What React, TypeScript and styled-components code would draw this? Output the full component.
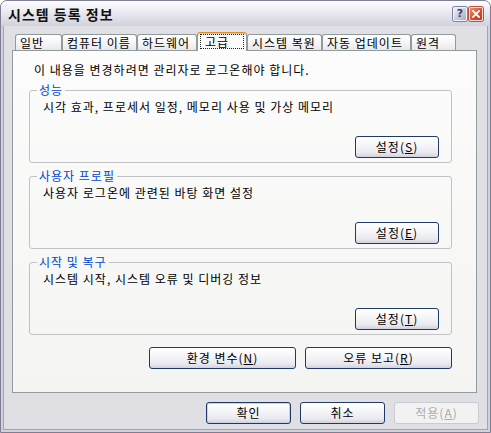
import React from 'react'
import styled, { createGlobalStyle } from 'styled-components'

const GlobalStyle = createGlobalStyle`
  html, body {
    margin: 0;
    padding: 0;
    background: #ffffff;
  }
  body {
    font: 12px 'Noto Sans CJK KR', 'Noto Sans', sans-serif;
    letter-spacing: 1px;
    color: #000;
  }
`

const Window = styled.div`
  width: 491px;
  height: 433px;
  box-sizing: border-box;
  border: 1px solid #7d7d94;
  border-radius: 7px 7px 0 0;
  background: #d2d2de;
  display: flex;
  flex-direction: column;
  overflow: hidden;
`

const TitleBar = styled.div`
  height: 25px;
  flex: none;
  display: flex;
  align-items: center;
  padding: 0 7px 0 7px;
  background: linear-gradient(#fdfdfe 0%, #eeeef3 35%, #dcdce5 75%, #d2d2de 100%);
`

const TitleText = styled.div`
  flex: 1;
  font-weight: bold;
  font-size: 14px;
  line-height: 16px;
  letter-spacing: 1px;
  color: #111;
  margin-top: 1px;
`

const CaptionButtons = styled.div`
  display: flex;
  gap: 2px;
`

const CaptionButton = styled.div<{ $close?: boolean }>`
  width: 14px;
  height: 14px;
  box-sizing: border-box;
  border: 1px solid ${p => (p.$close ? '#f7e1d8' : '#f2f3f8')};
  border-radius: 2px;
  background: ${p =>
    p.$close
      ? 'linear-gradient(135deg, #f08a6a, #d9472a 60%, #c23a20)'
      : 'linear-gradient(135deg, #f0f1f6, #c4c7d8 60%, #a8abc4)'};
  box-shadow: 0 0 0 1px ${p => (p.$close ? '#b25540' : '#7e829e')};
  display: flex;
  align-items: center;
  justify-content: center;
  color: #3c3f5c;
  font: bold 11px 'DejaVu Sans', sans-serif;
  letter-spacing: 0;
  line-height: 12px;
`

const Client = styled.div`
  flex: 1;
  margin: 0 2px 2px;
  border: 1px solid #a2a2b6;
  border-top: none;
  background: #e0dfe3;
  display: flex;
  flex-direction: column;
  padding-top: 8px;
`

const TabRow = styled.div`
  height: 16px;
  display: flex;
  align-items: flex-end;
  padding-left: 11px;
`

const Tab = styled.div<{ $w: number; $active?: boolean }>`
  box-sizing: border-box;
  width: ${p => p.$w}px;
  height: ${p => (p.$active ? 19 : 16)}px;
  margin-bottom: ${p => (p.$active ? -1 : 0)}px;
  position: relative;
  z-index: ${p => (p.$active ? 1 : 0)};
  border: 1px solid #919b9c;
  border-bottom: none;
  border-top-color: ${p => (p.$active ? '#e68b2c' : '#919b9c')};
  border-radius: 3px 3px 0 0;
  box-shadow: ${p => (p.$active ? 'inset 0 1px 0 #ffc83c' : 'none')};
  background: ${p =>
    p.$active ? '#fcfcfc' : 'linear-gradient(#ffffff, #f5f5f7 55%, #e8e8ec)'};
  padding: ${p => (p.$active ? '1px 2px 2px' : '0 4px')};
  display: flex;
  align-items: center;
  line-height: 14px;
  white-space: nowrap;
  overflow: hidden;
`

const FocusBox = styled.div`
  flex: 1;
  align-self: stretch;
  border: 1px dotted #222;
  padding-left: 4px;
  display: flex;
  align-items: center;
`

const Panel = styled.div`
  box-sizing: border-box;
  height: 343px;
  margin: 0 10px 0 8px;
  border: 1px solid #919b9c;
  background: linear-gradient(#fcfcfc, #f4f4f2);
  padding: 12px 24px 0 16px;
  display: flex;
  flex-direction: column;
`

const Notice = styled.div`
  line-height: 14px;
  margin-left: 5px;
`

const Group = styled.fieldset`
  margin: 6px 0 0;
  border: 1px solid #c2c2c6;
  border-radius: 3px;
  padding: 0 12px 4px 13px;
  min-width: 0;
`

const Legend = styled.legend`
  padding: 0 2px;
  margin-left: -6px;
  line-height: 14px;
  color: #0046d5;
`

const GroupText = styled.div`
  margin-top: 3px;
  line-height: 14px;
`

const ButtonRow = styled.div<{ $gap: number; $top: number }>`
  display: flex;
  justify-content: flex-end;
  gap: ${p => p.$gap}px;
  margin-top: ${p => p.$top}px;
`

const Button = styled.div<{ $w: number; $default?: boolean; $disabled?: boolean }>`
  box-sizing: border-box;
  width: ${p => p.$w}px;
  height: 22px;
  border: 1px solid ${p => (p.$disabled ? '#cacad0' : '#1f3a68')};
  border-radius: 3px;
  background: ${p =>
    p.$disabled
      ? '#f2f2f2'
      : 'linear-gradient(#ffffff, #f6f6f9 40%, #e8e8ef 80%, #d2d2de)'};
  box-shadow: ${p => (p.$default ? 'inset 0 0 0 1px #c4d2f0' : 'none')};
  color: ${p => (p.$disabled ? '#ababab' : '#000')};
  display: flex;
  align-items: center;
  justify-content: center;
  line-height: 14px;
  white-space: nowrap;
`

const DialogButtons = styled(ButtonRow)`
  padding-right: 8px;
`

const tabs = [
  { label: '일반', w: 47 },
  { label: '컴퓨터 이름', w: 75 },
  { label: '하드웨어', w: 60 },
  { label: '고급', w: 50, active: true },
  { label: '시스템 복원', w: 75 },
  { label: '자동 업데이트', w: 89 },
  { label: '원격', w: 45 },
]

const groups = [
  { title: '성능', text: '시각 효과, 프로세서 일정, 메모리 사용 및 가상 메모리', key: 'S' },
  { title: '사용자 프로필', text: '사용자 로그온에 관련된 바탕 화면 설정', key: 'E' },
  { title: '시작 및 복구', text: '시스템 시작, 시스템 오류 및 디버깅 정보', key: 'T' },
]

function Mnemonic({ label, k }: { label: string; k: string }) {
  return (
    <span>
      {label}(<u>{k}</u>)
    </span>
  )
}

export default function App() {
  return (
    <>
      <GlobalStyle />
      <Window>
        <TitleBar>
          <TitleText>시스템 등록 정보</TitleText>
          <CaptionButtons>
            <CaptionButton>?</CaptionButton>
            <CaptionButton $close>
              <svg width="8" height="8" viewBox="0 0 8 8">
                <path d="M1 1L7 7M7 1L1 7" stroke="#fff" strokeWidth="1.8" strokeLinecap="square" />
              </svg>
            </CaptionButton>
          </CaptionButtons>
        </TitleBar>
        <Client>
          <TabRow>
            {tabs.map(t => (
              <Tab key={t.label} $w={t.w} $active={t.active}>
                {t.active ? <FocusBox>{t.label}</FocusBox> : t.label}
              </Tab>
            ))}
          </TabRow>
          <Panel>
            <Notice>이 내용을 변경하려면 관리자로 로그온해야 합니다.</Notice>
            {groups.map(g => (
              <Group key={g.title}>
                <Legend>{g.title}</Legend>
                <GroupText>{g.text}</GroupText>
                <ButtonRow $gap={0} $top={22}>
                  <Button $w={84}>
                    <Mnemonic label="설정" k={g.key} />
                  </Button>
                </ButtonRow>
              </Group>
            ))}
            <ButtonRow $gap={9} $top={12}>
              <Button $w={147}>
                <Mnemonic label="환경 변수" k="N" />
              </Button>
              <Button $w={147}>
                <Mnemonic label="오류 보고" k="R" />
              </Button>
            </ButtonRow>
          </Panel>
          <DialogButtons $gap={9} $top={9}>
            <Button $w={85} $default>확인</Button>
            <Button $w={85}>취소</Button>
            <Button $w={85} $disabled>
              <Mnemonic label="적용" k="A" />
            </Button>
          </DialogButtons>
        </Client>
      </Window>
    </>
  )
}
